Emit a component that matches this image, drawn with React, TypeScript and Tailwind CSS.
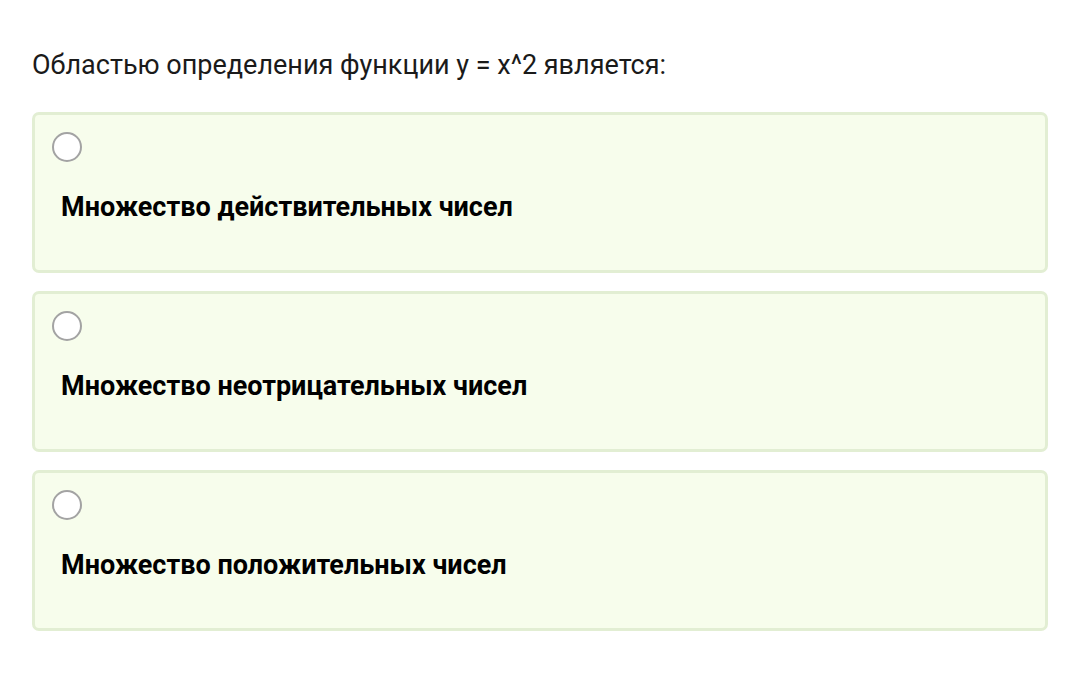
const options = [
  "Множество действительных чисел",
  "Множество неотрицательных чисел",
  "Множество положительных чисел",
];

export default function App() {
  return (
    <div className="min-h-[678px] w-[1080px] bg-white pl-[32px] pr-[32px] pt-[46px] font-['Roboto',sans-serif]">
      <p className="text-[27px] leading-[38px] text-[#1a1a1a]">
        Областью определения функции y = x^2 является:
      </p>
      <div className="mt-[28px] flex flex-col gap-[18px]">
        {options.map((text) => (
          <label
            key={text}
            className="flex h-[161px] flex-col rounded-[7px] border-[3px] border-[#e2eed3] bg-[#f7fdec] pl-[17px] pt-[17px]"
          >
            <span className="block h-[30px] w-[30px] rounded-full border-2 border-[#a3a3a3] bg-white" />
            <span className="mt-[30px] pl-[9px] text-[27px] font-bold leading-[30px] text-black">
              {text}
            </span>
          </label>
        ))}
      </div>
    </div>
  );
}
